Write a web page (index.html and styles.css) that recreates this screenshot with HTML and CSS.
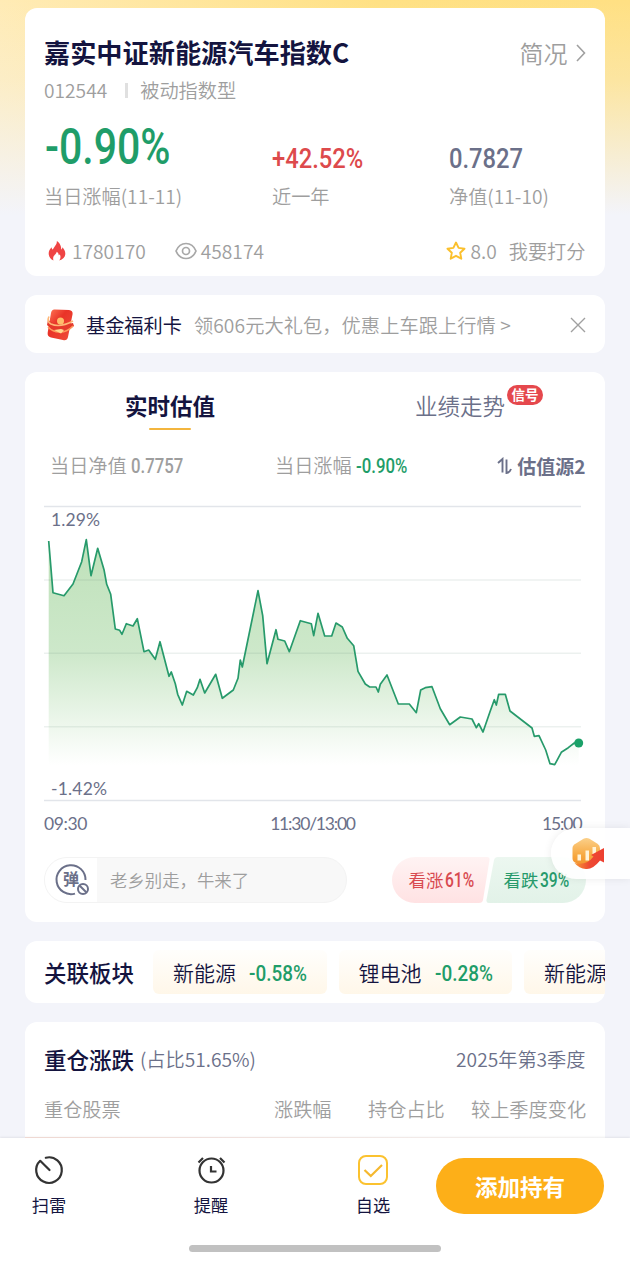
FILE: index.html
```
<!DOCTYPE html>
<html lang="zh-CN">
<head>
    <meta charset="UTF-8">
    <meta name="viewport" content="width=device-width, initial-scale=1.0">
    <title>嘉实中证新能源汽车指数C</title>
    <link rel="stylesheet" href="styles.css">
</head>
<body>
    <div class="page">
        <section class="card fund">
            <div class="fund-head">
                <h1>嘉实中证新能源汽车指数C</h1>
                <a class="brief">简况
                    <svg width="10" height="18" viewBox="0 0 10 18"><path d="M1 1l7.500 8L1 17" fill="none" stroke="#a0a0a0" stroke-width="1.600"/></svg>
                </a>
            </div>
            <div class="fund-code"><span>012544</span><i class="divider"></i><span>被动指数型</span></div>
            <div class="stats">
                <div class="stat">
                    <b class="num num-xl green">-0.90%</b>
                    <span>当日涨幅(11-11)</span>
                </div>
                <div class="stat">
                    <b class="num num-l red">+42.52%</b>
                    <span>近一年</span>
                </div>
                <div class="stat">
                    <b class="num num-l slate">0.7827</b>
                    <span>净值(11-10)</span>
                </div>
            </div>
            <div class="social">
                <svg class="flame" width="18" height="20" viewBox="0 0 18 20"><path d="M8.800 0C9.300 3.500 6 5.600 4.800 8.600 4 8.200 3.700 7.400 3.700 6.300 1.500 8.300.6 10.500.7 12.700c.2 3.500 2 5.700 4.800 6.800-1-3 .2-4.800 1.900-6.300.8-.8 1.200-1.500 1.300-2.500 1.600 1 2.100 2.300 2 3.600.5-.2.9-.6 1.100-1.100 1.100 2.200.9 4.500-.5 6.300 3.600-1 5.900-3.500 6-6.600.1-2.800-1.100-4.800-2.900-6.700-.1 1.200-.4 1.900-1.100 2.300C13.200 5.600 12.200 2 8.800 0z" fill="#ef4444"/></svg>
                <span class="hot">1780170</span>
                <svg class="eye" width="22" height="18" viewBox="0 0 22 18"><path d="M1 9C3 4.200 6.700 1.500 11 1.500S19 4.200 21 9c-2 4.800-5.700 7.500-10 7.500S3 13.800 1 9z" fill="none" stroke="#a8a8a8" stroke-width="1.700"/><circle cx="11" cy="9" r="3.500" fill="none" stroke="#a8a8a8" stroke-width="1.700"/></svg>
                <span>458174</span>
                <svg class="star" width="20" height="20" viewBox="0 0 20 20"><path d="M10 1.500l2.600 5.400 5.900.8-4.300 4.100 1.100 5.900L10 14.800l-5.300 2.900 1.100-5.900L1.500 7.700l5.900-.8z" fill="none" stroke="#fbc02d" stroke-width="1.900" stroke-linejoin="round"/></svg>
                <span class="score">8.0</span>
                <span>我要打分</span>
            </div>
        </section>

        <section class="card promo">
            <svg class="packet" width="30" height="34" viewBox="0 0 30 34">
                <defs>
                    <linearGradient id="packetRed" x1="0" y1="0" x2="1" y2="1"><stop offset="0" stop-color="#ff7a58"/><stop offset=".4" stop-color="#e93328"/><stop offset="1" stop-color="#f0503a"/></linearGradient>
                </defs>
                <path d="M9 1.500l14 .5q4 .5 3.600 4L22 29q-1 4-5 3L5 29.500q-4-1-3.300-5L5 5q.7-4 4-3.500z" fill="url(#packetRed)"/>
                <path d="M2 12q9 7 25 3l1 3q-5 4.500-12 5Q6 23 1 17z" fill="#e5392b"/>
                <path d="M3 8.500q-2.500 5 2 7.500 9 4 22-3" fill="none" stroke="#ffb676" stroke-width="1.600"/>
                <path d="M2 19q5 5 11 5 8 .5 14-6" fill="none" stroke="#ff9a5c" stroke-width="1.500"/>
                <path d="M8 22l7 3.500 3-3.500-3-1z" fill="#ffd98f"/>
                <circle cx="14.500" cy="13" r="3.500" fill="#ffbd6b"/>
            </svg>
            <strong>基金福利卡</strong>
            <span class="promo-text">领606元大礼包，优惠上车跟上行情 &gt;</span>
            <svg class="close" width="16" height="16" viewBox="0 0 16 16"><path d="M1 1l14 14M15 1L1 15" stroke="#a0a0a0" stroke-width="1.400"/></svg>
        </section>

        <section class="card trend">
            <div class="tabs">
                <div class="tab active">实时估值</div>
                <div class="tab">业绩走势<em class="badge">信号</em></div>
            </div>
            <div class="quote">
                <span class="quote-nav">当日净值 <b class="num num-s">0.7757</b></span>
                <span class="quote-rise">当日涨幅 <b class="num num-s green">-0.90%</b></span>
                <strong class="source">
                    <svg width="16" height="18" viewBox="0 0 16 18"><path d="M1 6L5.500 2V15.500M9.500 2.500v13.500q3 0 4.500-4" fill="none" stroke="#6b7089" stroke-width="1.900"/></svg>
                    估值源2
                </strong>
            </div>
            <svg class="chart" width="542" height="300" viewBox="0 0 542 300">
                <defs>
                    <linearGradient id="fade" gradientUnits="userSpaceOnUse" x1="0" y1="35" x2="0" y2="260">
                        <stop offset="0" stop-color="#bfe1ba"/>
                        <stop offset=".5" stop-color="#cde8ca"/>
                        <stop offset="1" stop-color="#ffffff"/>
                    </linearGradient>
                </defs>
                <path id="area" fill="url(#fade)"/>
                <g stroke-width="1.500">
                    <path d="M0 1.500h537M0 295.500h537" stroke="#e2e5ea"/>
                    <path d="M0 75h537M0 148.300h537M0 221.700h537" stroke="#5f8c7c" stroke-opacity=".12"/>
                </g>
                <polyline id="line" fill="none" stroke="#279a6b" stroke-width="1.700" stroke-linejoin="round"/>
                <circle cx="534.700" cy="238" r="4.500" fill="#1ba169"/>
                <text x="7" y="20.500" textLength="49">1.29%</text>
                <text x="7" y="290" textLength="56">-1.42%</text>
            </svg>
            <div class="times"><span class="open">09:30</span><span class="noon">11:30/13:00</span><span>15:00</span></div>
            <div class="talk">
                <div class="danmu">
                    <div class="danmu-switch">
                        <svg width="36" height="34" viewBox="0 0 36 34">
                            <path d="M31.500 17A14.500 14.500 0 1 0 21 30.600" fill="none" stroke="#6b7089" stroke-width="2"/>
                            <text class="danmu-char" x="17" y="22">弹</text>
                            <circle cx="29" cy="26" r="5" fill="#fff" stroke="#6b7089" stroke-width="2"/>
                            <path d="M25.500 22.500l7 7" stroke="#6b7089" stroke-width="2"/>
                        </svg>
                    </div>
                    <span>老乡别走，牛来了</span>
                </div>
                <div class="vote">
                    <svg class="vote-shape" width="194" height="46" viewBox="0 0 194 46">
                        <defs>
                            <linearGradient id="up" x1="0" y1="0" x2="0" y2="1"><stop offset="0" stop-color="#fff3f3"/><stop offset="1" stop-color="#ffe2e3"/></linearGradient>
                            <linearGradient id="down" x1="0" y1="0" x2="0" y2="1"><stop offset="0" stop-color="#ecf7f0"/><stop offset="1" stop-color="#e2f2e8"/></linearGradient>
                        </defs>
                        <path d="M23 0H95q3 0 2.500 3L91 43q-.5 3-4 3H23a23 23 0 0 1 0-46z" fill="url(#up)"/>
                        <path d="M106 0h65a23 23 0 0 1 0 46H97q-3 0-2.500-3L102 3q.7-3 4-3z" fill="url(#down)"/>
                    </svg>
                    <span class="vote-up">看涨<b class="num num-v">61%</b></span>
                    <span class="vote-down">看跌<b class="num num-v">39%</b></span>
                </div>
            </div>
        </section>

        <section class="card sectors">
            <h2>关联板块</h2>
            <div class="chip">新能源<b class="num num-m green">-0.58%</b></div>
            <div class="chip">锂电池<b class="num num-m green">-0.28%</b></div>
            <div class="chip">新能源</div>
        </section>

        <section class="card holdings">
            <div class="holdings-head">
                <h2>重仓涨跌</h2>
                <span>(占比51.65%)</span>
                <span class="quarter">2025年第3季度</span>
            </div>
            <div class="holdings-cols">
                <span>重仓股票</span><span>涨跌幅</span><span>持仓占比</span><span>较上季度变化</span>
            </div>
            <div class="holdings-row"></div>
        </section>
    </div>

    <div class="float">
        <svg width="36" height="34" viewBox="0 0 36 34">
            <defs>
                <linearGradient id="gold" x1="0" y1="0" x2="0" y2="1"><stop offset="0" stop-color="#fbd08a"/><stop offset=".6" stop-color="#f7a63c"/><stop offset="1" stop-color="#f08a2c"/></linearGradient>
                <linearGradient id="arrow" x1="0" y1="0" x2="1" y2="0"><stop offset="0" stop-color="#f79a35"/><stop offset=".5" stop-color="#ee4a33"/><stop offset="1" stop-color="#ed3f31"/></linearGradient>
            </defs>
            <path d="M14.500 1.800q3-1.600 6 0l8 5q2.500 1.500 2.500 4.500v10q0 3-2.500 4.500l-8 5q-3 1.600-6 0l-8-5Q3.500 24.300 3.500 21.300v-10q0-3 3-4.500z" fill="url(#gold)"/>
            <path d="M8.500 17.500H12v6H8.500zM16.500 13.500H20v10h-3.500zM23.500 10H27v7h-3.500z" fill="#fff3d8"/>
            <path d="M5.500 26q12 3 19-6.500L22 18l13-7v14.500l-4-2Q24 32.500 17 32q-7-.5-11.500-6z" fill="url(#arrow)"/>
        </svg>
    </div>

    <nav class="bar">
        <div class="bar-item">
            <svg width="32" height="32" viewBox="0 0 32 32"><path d="M12.800 3.700A12.800 12.800 0 1 1 7.200 6.800L16.500 16" fill="none" stroke="#333" stroke-width="2.200" stroke-linejoin="round" stroke-linecap="round"/></svg>
            <span>扫雷</span>
        </div>
        <div class="bar-item">
            <svg width="32" height="32" viewBox="0 0 32 32" fill="none" stroke="#333" stroke-width="2.200"><circle cx="16.500" cy="16.500" r="12"/><path d="M16 12v5.500h5.500M3.500 8.500L8 4M29.500 8.500L25 4"/></svg>
            <span>提醒</span>
        </div>
        <div class="bar-item">
            <svg width="32" height="32" viewBox="0 0 32 32" fill="none" stroke="#fbc22f"><rect x="2" y="2" width="28" height="28" rx="7" stroke-width="2"/><path d="M7.500 16l6.300 6L25 11" stroke="#f5b82e" stroke-width="2.200"/></svg>
            <span>自选</span>
        </div>
        <button class="add">添加持有</button>
        <div class="home"></div>
    </nav>

    <script>
        // valuation series, x,y in chart units
        const points = '4.7,36 9,87.7 20,90.7 29,79 37.7,56.7 42.3,34.7 47,70.7 53.7,43.3 60,64.7 62.7,79.3 66.7,89.3 71.3,124 75.7,125.3 78,129.3 82.3,118.7 89,121 93.3,113.7 100,146.7 104.7,145 111.3,154.3 116,136.7 125,171.3 127.3,167 131.3,178.7 133.7,189.3 138.3,200 142.7,186.3 149.3,190 153.3,182.7 156,174.3 160.7,188 171.7,169.3 178.3,193.3 189.3,185 194,173.3 196.3,155 198.3,162 214,85.7 218.7,110.7 223,158.7 232,124.7 234,134.3 240.7,136 245.3,146.7 256.3,115.7 267.3,118.7 269.7,130.7 274,108.3 280.7,131 287.7,131 292,118 298.3,122 303.3,133.3 309.7,140.7 314,166.3 321.3,179 325.7,182 332,182 334.3,187 336.3,179.3 343,170 354.3,199 365.3,199 372.3,207.7 376.7,185 381.3,182.7 388,181.7 396.3,203.7 405.7,219.7 416.3,212 428,214 432.3,222.7 434.7,218.7 439,227 446,206.7 450.3,194.7 452.3,200 454.7,189.3 461.3,189.3 466,206 488,223 490.3,231.3 495,230.7 501.7,245 506,258.7 510.7,259.7 517.3,247.3 524.3,242.7 530.3,238 534.7,238';
        document.getElementById('line').setAttribute('points', points);
        document.getElementById('area').setAttribute('d', 'M4.7,262 L' + points + ' L534.7,262 Z');
    </script>
</body>
</html>
```
FILE: styles.css
```
* {
    box-sizing: border-box;
}
body {
    margin: 0;
    height: 1265px;
    overflow: hidden;
    position: relative;
    font-family: "Noto Sans CJK SC", sans-serif;
    font-size: 19.2px;
    font-weight: 350;
    line-height: 28px;
    color: #9e9e9e;
    background: linear-gradient(to bottom, rgba(243, 244, 250, 0), rgba(243, 244, 250, 0.25) 80px, #f3f4fa 215px), linear-gradient(to right, #ffebb5, #ffe184 60%, #ffe083);
}
h1, h2 {
    margin: 0;
    color: #14143f;
}
h1 {
    font-size: 26.2px;
    font-weight: 700;
}
h2 {
    font-size: 22.5px;
    font-weight: 500;
}
svg {
    flex: none;
}
.page {
    display: flex;
    flex-direction: column;
    gap: 19px;
    padding: 8px 25px 0 24.5px;
}
.card {
    flex: none;
    background: #fff;
    border-radius: 12px;
    padding: 0 19.5px;
    white-space: nowrap;
}
.green {
    color: #1f9d69;
}
.red {
    color: #dd4a4c;
}
.slate {
    color: #6b7089;
}

/* narrow figures */
.num {
    display: inline-block;
    font-family: Roboto, sans-serif;
    font-weight: 500;
    transform: scaleX(0.86);
    transform-origin: left center;
}
.num-xl {
    font-size: 50px;
    transform: scaleX(0.82);
    margin-left: 1px;
}
.num-l {
    font-size: 27px;
    transform: scaleX(0.88);
}
.num-m {
    font-size: 22px;
}
.num-s {
    font-size: 19.5px;
}
.num-v {
    font-size: 19.5px;
    transform: scaleX(0.8);
}

/* fund summary */
.fund {
    height: 268px;
}
.fund-head {
    display: flex;
    justify-content: space-between;
    align-items: center;
    padding-top: 26px;
    height: 62px;
}
.brief {
    display: flex;
    align-items: center;
    gap: 8px;
    padding-top: 2px;
    font-size: 24px;
}
.fund-code {
    display: flex;
    align-items: center;
    margin-top: 6px;
    height: 28px;
}
.divider {
    width: 3px;
    height: 15px;
    margin: 0 12px 0 18px;
    background: #e0e0e0;
}
.stats {
    display: grid;
    grid-template-columns: 228px 177px 1fr;
    margin-top: 12px;
}
.stat {
    display: flex;
    flex-direction: column;
}
.stat .num {
    height: 66px;
    line-height: 62px;
}
.stat .num-l {
    line-height: 86px;
}
.social {
    display: flex;
    align-items: center;
    margin-top: 27px;
}
.flame {
    margin: 0 6px 0 4px;
}
.eye {
    margin: 0 4px 0 29px;
}
.star {
    margin: 0 5px 0 auto;
}
.score {
    margin-right: 12px;
}

/* promo strip */
.promo {
    display: flex;
    align-items: center;
    height: 58px;
    padding-top: 1px;
}
.packet {
    margin: 0 10px 0 2px;
}
.promo strong {
    margin-right: 12px;
    font-weight: 400;
    color: #14143f;
}
.promo-text {
    letter-spacing: 0.1px;
}
.close {
    margin-left: auto;
}

/* estimate chart */
.trend {
    height: 550px;
}
.tabs {
    display: flex;
    height: 59px;
    padding-top: 20px;
}
.tab {
    position: relative;
    margin-left: 81px;
    font-size: 22.5px;
    line-height: 27px;
    color: #6b7089;
}
.tab + .tab {
    margin-left: 200px;
}
.tab.active {
    font-weight: 700;
    color: #14143f;
}
.tab.active::after {
    content: "";
    display: block;
    width: 42px;
    height: 2px;
    margin: 9px auto 0;
    border-radius: 2px;
    background: #f3b53d;
}
.badge {
    position: absolute;
    left: 92px;
    top: -7px;
    width: 36px;
    height: 20px;
    border-radius: 10px;
    background: #e5484d;
    color: #fff;
    font-size: 13.5px;
    font-style: normal;
    font-weight: 700;
    line-height: 19px;
    text-align: center;
}
.quote {
    display: flex;
    align-items: center;
    height: 28px;
    margin-top: 21px;
    padding-left: 6px;
}
.quote-nav {
    width: 225px;
}
.source {
    display: flex;
    align-items: center;
    gap: 4px;
    margin-left: auto;
    font-size: 19px;
    font-weight: 700;
    color: #6b7089;
}
.chart {
    display: block;
    margin-top: 25px;
}
.chart text {
    font-family: Lato, sans-serif;
    font-size: 17.5px;
    font-weight: 400;
    fill: #6b7089;
}
.times {
    display: flex;
    justify-content: space-between;
    padding-right: 4px;
    margin-top: 5px;
    font-family: Lato, sans-serif;
    font-size: 17.5px;
    font-weight: 400;
    letter-spacing: -1.1px;
    color: #6b7089;
}
.open {
    letter-spacing: -0.4px;
}
.noon {
    margin-right: 4px;
    letter-spacing: -1.2px;
}
.talk {
    display: flex;
    justify-content: space-between;
    margin-top: 19px;
    font-size: 17.4px;
}
.danmu {
    display: flex;
    align-items: center;
    width: 303px;
    height: 46px;
    border: 1.5px solid #f3f3f3;
    border-radius: 23px;
    background: #f8f8f8;
    overflow: hidden;
}
.danmu-switch {
    display: flex;
    align-items: center;
    width: 52px;
    height: 46px;
    margin-right: 13px;
    padding-left: 9px;
    background: #fff;
}
.danmu-char {
    font-size: 16px;
    font-weight: 700;
    text-anchor: middle;
    fill: #6b7089;
}
.vote {
    position: relative;
    display: flex;
    align-items: center;
    width: 194px;
    height: 46px;
    font-weight: 400;
}
.vote-shape {
    position: absolute;
    left: 0;
    top: 0;
}
.vote span {
    position: relative;
    width: 95px;
    padding-left: 17px;
    color: #d84a50;
}
.vote .vote-down {
    color: #279a6b;
}
.vote .num {
    margin-left: 2px;
}

/* related sectors */
.sectors {
    display: flex;
    align-items: center;
    gap: 12px;
    height: 62px;
    overflow: hidden;
}
.sectors h2 {
    margin-right: 7px;
}
.chip {
    flex: none;
    width: 173.5px;
    height: 44px;
    padding-left: 20px;
    border-radius: 6px;
    background: linear-gradient(#fffefc, #fff7e9);
    color: #14143f;
    font-size: 21px;
    line-height: 44px;
}
.chip .num {
    margin-left: 13px;
}

/* top holdings */
.holdings {
    height: 140px;
}
.holdings-head {
    display: flex;
    align-items: center;
    padding-top: 23px;
    color: #6b7089;
}
.holdings-head h2 {
    margin-right: 6px;
}
.quarter {
    margin-left: auto;
}
.holdings-cols {
    display: grid;
    grid-template-columns: 230px 94px 103px 1fr;
    margin-top: 22px;
}
.holdings-row {
    height: 20px;
    margin: 14px -19.5px 0;
    background: linear-gradient(to right, #fbe3dd, #fff);
}

/* floating shortcut */
.float {
    position: absolute;
    right: 0;
    top: 828px;
    display: flex;
    align-items: center;
    width: 79px;
    height: 51px;
    padding-left: 18px;
    border-radius: 26px 0 0 26px;
    background: rgba(255, 255, 255, 0.9);
    box-shadow: 0 0 8px rgba(0, 0, 0, 0.08);
}

/* bottom bar */
.bar {
    position: absolute;
    left: 0;
    right: 0;
    bottom: 0;
    display: flex;
    height: 127px;
    padding: 16px 26px 0 8px;
    background: #fff;
    box-shadow: 0 -1px 2px rgba(0, 0, 0, 0.07);
}
.bar-item {
    display: flex;
    flex-direction: column;
    align-items: center;
    width: 82px;
    margin-right: 80px;
    font-size: 17.2px;
    font-weight: 400;
    color: #14143f;
}
.bar-item span {
    margin-top: 5px;
}
.bar-item:nth-child(3) {
    margin-right: 0;
}
.add {
    width: 168px;
    height: 56px;
    margin: 4px 0 0 auto;
    border: 0;
    border-radius: 28px;
    background: #fdaf18;
    color: #fff;
    font-family: inherit;
    font-size: 22.5px;
    font-weight: 700;
}
.home {
    position: absolute;
    left: 189px;
    bottom: 13px;
    width: 252px;
    height: 7px;
    border-radius: 4px;
    background: #c1c1c1;
}
```
